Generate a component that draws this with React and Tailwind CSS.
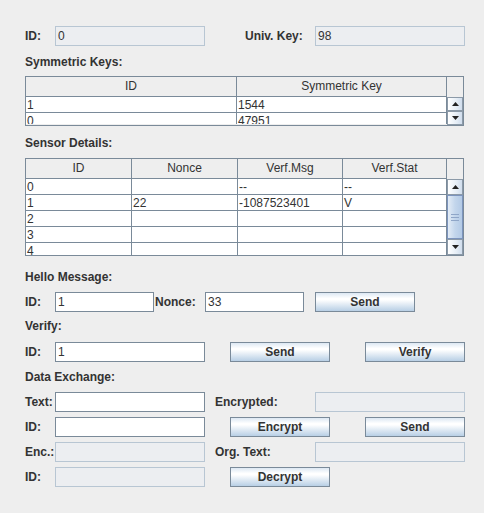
import React from "react";

const btnBg =
  "bg-[linear-gradient(to_bottom,#dde8f3_0%,#ffffff_30%,#ffffff_38%,#b8cfe5_100%)]";

function Label({ w, children, className = "" }) {
  return (
    <div className={`${w} shrink-0 font-bold whitespace-nowrap ${className}`}>{children}</div>
  );
}

function Field({ w, value = "", disabled = false }) {
  return (
    <div
      className={`${w} h-[20px] shrink-0 border pl-[2px] leading-[18px] ${
        disabled ? "bg-[#eceef1] border-[#b8c6d3]" : "bg-white border-[#7a8a99]"
      }`}
    >
      {value}
    </div>
  );
}

function Button({ children }) {
  return (
    <div
      className={`w-[100px] h-[20px] shrink-0 border border-[#7a8a99] ${btnBg} flex items-center justify-center font-bold`}
    >
      {children}
    </div>
  );
}

function Arrow({ up }) {
  return (
    <svg width="7" height="4" viewBox="0 0 7 4">
      {up ? <path d="M0 4 L3.5 0 L7 4 Z" fill="#222" /> : <path d="M0 0 L7 0 L3.5 4 Z" fill="#222" />}
    </svg>
  );
}

function ScrollBtn({ up, h }) {
  return (
    <div
      className={`${h} w-full shrink-0 border border-[#8c9aa8] bg-[linear-gradient(to_right,#ffffff,#e6eef6_60%,#d0dded)] flex items-center justify-center`}
    >
      <Arrow up={up} />
    </div>
  );
}

function Table({ cols, widths, rows, bodyH, thumb, btnH }) {
  return (
    <div className="w-[439px] border border-[#7a8a99] flex">
      <div className="w-[421px] shrink-0">
        <div className="flex h-[20px] bg-[#eeeeee] border-b border-[#7a8a99]">
          {cols.map((c, i) => (
            <div
              key={i}
              className={`${widths[i]} shrink-0 border-r border-[#7a8a99] text-center leading-[19px]`}
            >
              {c}
            </div>
          ))}
        </div>
        <div className={`${bodyH} overflow-hidden bg-white`}>
          {rows.map((r, ri) => (
            <div key={ri} className="flex h-[16px] border-b border-[#7a8a99]">
              {r.map((c, i) => (
                <div
                  key={i}
                  className={`${widths[i]} shrink-0 border-r border-[#7a8a99] pl-[1px] leading-[16px] whitespace-nowrap overflow-hidden`}
                >
                  {c}
                </div>
              ))}
            </div>
          ))}
        </div>
      </div>
      <div className="w-[16px] shrink-0 flex flex-col">
        <div className="h-[20px] shrink-0 bg-[#eeeeee]"></div>
        <div className="flex-1 flex flex-col bg-[#f2f2f2]">
          <ScrollBtn up h={btnH} />
          <div className="flex-1 flex flex-col">
            {thumb && (
              <div className="flex-1 border border-[#7c94bd] bg-[linear-gradient(to_right,#e3ecf6,#c3d6ec_50%,#b3cae6)] flex flex-col items-center justify-center gap-[2px]">
                <div className="w-[8px] h-[1px] bg-[#8fa6c8]"></div>
                <div className="w-[8px] h-[1px] bg-[#8fa6c8]"></div>
                <div className="w-[8px] h-[1px] bg-[#8fa6c8]"></div>
              </div>
            )}
          </div>
          <ScrollBtn h={btnH} />
        </div>
      </div>
    </div>
  );
}

export default function App() {
  return (
    <div className="w-[484px] h-[513px] bg-[#eeeeee] pl-[25px] pt-[26px] text-[12px] text-[#333333] font-['Liberation_Sans',Arial,sans-serif]">
      <div className="flex items-center h-[20px]">
        <Label w="w-[30px]">ID:</Label>
        <Field w="w-[150px]" value="0" disabled />
        <div className="w-[40px] shrink-0"></div>
        <Label w="w-[70px]">Univ. Key:</Label>
        <Field w="w-[150px]" value="98" disabled />
      </div>

      <div className="mt-[8px] h-[16px] leading-[16px] font-bold">Symmetric Keys:</div>
      <div className="mt-[6px]">
        <Table
          cols={["ID", "Symmetric Key"]}
          widths={["w-[211px]", "w-[210px]"]}
          rows={[
            ["1", "1544"],
            ["0", "47951"],
          ]}
          bodyH="h-[27px]"
          btnH="h-[14px]"
        />
      </div>

      <div className="mt-[9px] h-[16px] leading-[16px] font-bold">Sensor Details:</div>
      <div className="mt-[7px]">
        <Table
          cols={["ID", "Nonce", "Verf.Msg", "Verf.Stat"]}
          widths={["w-[106px]", "w-[106px]", "w-[105px]", "w-[104px]"]}
          rows={[
            ["0", "", "--", "--"],
            ["1", "22", "-1087523401", "V"],
            ["2", "", "", ""],
            ["3", "", "", ""],
            ["4", "", "", ""],
            ["5", "", "", ""],
          ]}
          bodyH="h-[76px]"
          btnH="h-[16px]"
          thumb
        />
      </div>

      <div className="mt-[13px] h-[16px] leading-[16px] font-bold">Hello Message:</div>
      <div className="mt-[7px] flex items-center h-[20px]">
        <Label w="w-[30px]">ID:</Label>
        <Field w="w-[99px]" value="1" />
        <Label w="w-[51px]" className="pl-[1px]">Nonce:</Label>
        <Field w="w-[99px]" value="33" />
        <div className="w-[11px] shrink-0"></div>
        <Button>Send</Button>
      </div>

      <div className="mt-[6px] h-[16px] leading-[16px] font-bold">Verify:</div>
      <div className="mt-[8px] flex items-center h-[20px]">
        <Label w="w-[30px]">ID:</Label>
        <Field w="w-[150px]" value="1" />
        <div className="w-[25px] shrink-0"></div>
        <Button>Send</Button>
        <div className="w-[35px] shrink-0"></div>
        <Button>Verify</Button>
      </div>

      <div className="mt-[7px] h-[16px] leading-[16px] font-bold">Data Exchange:</div>
      <div className="mt-[7px] flex items-center h-[20px]">
        <Label w="w-[30px]">Text:</Label>
        <Field w="w-[150px]" />
        <Label w="w-[110px]" className="pl-[10px]">Encrypted:</Label>
        <Field w="w-[150px]" disabled />
      </div>
      <div className="mt-[5px] flex items-center h-[20px]">
        <Label w="w-[30px]">ID:</Label>
        <Field w="w-[150px]" />
        <div className="w-[25px] shrink-0"></div>
        <Button>Encrypt</Button>
        <div className="w-[35px] shrink-0"></div>
        <Button>Send</Button>
      </div>
      <div className="mt-[5px] flex items-center h-[20px]">
        <Label w="w-[30px]">Enc.:</Label>
        <Field w="w-[150px]" disabled />
        <Label w="w-[110px]" className="pl-[10px]">Org. Text:</Label>
        <Field w="w-[150px]" disabled />
      </div>
      <div className="mt-[5px] flex items-center h-[20px]">
        <Label w="w-[30px]">ID:</Label>
        <Field w="w-[150px]" disabled />
        <div className="w-[25px] shrink-0"></div>
        <Button>Decrypt</Button>
      </div>
    </div>
  );
}
